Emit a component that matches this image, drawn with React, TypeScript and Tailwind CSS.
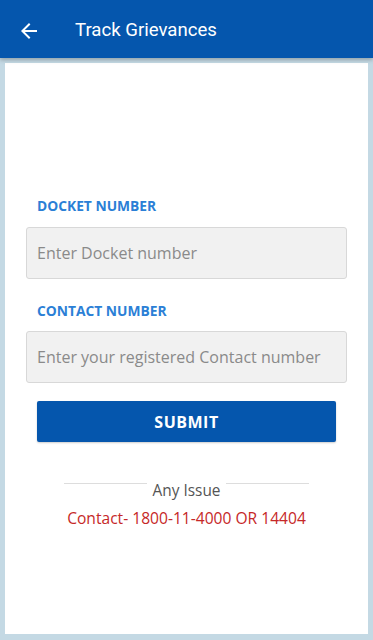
import { useState } from "react";

function BackArrow() {
  return (
    <svg className="w-6 h-6" viewBox="0 0 24 24" fill="white">
      <path d="M20 11H7.83l5.59-5.59L12 4l-8 8 8 8 1.41-1.41L7.83 13H20v-2z" />
    </svg>
  );
}

export default function App() {
  const [docket, setDocket] = useState("");
  const [contact, setContact] = useState("");

  return (
    <div className="min-h-[640px] h-[640px] bg-[#c4d9e4] flex flex-col font-['Open_Sans',sans-serif]">
      <header className="h-[58px] shrink-0 bg-[#0556ad] flex items-center px-[17px] pt-[4px] shadow-[0_2px_4px_rgba(0,0,0,0.25)] z-10">
        <BackArrow />
        <h1 className="ml-[34px] text-white text-[18.6px] font-['Roboto',sans-serif] font-normal">
          Track Grievances
        </h1>
      </header>

      <main className="flex-1 mx-[5px] mt-[5px] mb-[6px] bg-white flex flex-col px-[21px] pt-[133px]">
        <label className="ml-[11px] text-[13.8px] font-bold text-[#2b7fd6]">
          DOCKET NUMBER
        </label>
        <input
          value={docket}
          onChange={(e) => setDocket(e.target.value)}
          placeholder="Enter Docket number"
          className="mt-[10px] h-[52px] w-full rounded-[3px] border border-[#d8d8d8] bg-[#f1f1f1] px-[10px] text-[16px] text-[#333] placeholder:text-[#8a8a8a] outline-none"
        />

        <label className="ml-[11px] mt-[22px] text-[13.8px] font-bold text-[#2b7fd6]">
          CONTACT NUMBER
        </label>
        <input
          value={contact}
          onChange={(e) => setContact(e.target.value)}
          placeholder="Enter your registered Contact number"
          className="mt-[10px] h-[52px] w-full rounded-[3px] border border-[#d8d8d8] bg-[#f1f1f1] px-[10px] text-[16px] text-[#333] placeholder:text-[#8a8a8a] outline-none"
        />

        <button className="mx-[11px] mt-[18px] h-[41px] rounded-[2px] bg-[#0556ad] text-white text-[16px] font-bold tracking-[0.5px] shadow-[0_1px_2px_rgba(0,0,0,0.2)]">
          SUBMIT
        </button>

        <div className="mt-[41px] flex items-start justify-center">
          <div className="w-[83px] h-px bg-[#dddddd]" />
          <span className="mx-[6px] text-[15.4px] text-[#555] leading-[15px]">Any Issue</span>
          <div className="w-[83px] h-px bg-[#dddddd]" />
        </div>
        <p className="mt-[9px] text-center text-[15.6px] text-[#c62828]">
          Contact- 1800-11-4000 OR 14404
        </p>
      </main>
    </div>
  );
}
